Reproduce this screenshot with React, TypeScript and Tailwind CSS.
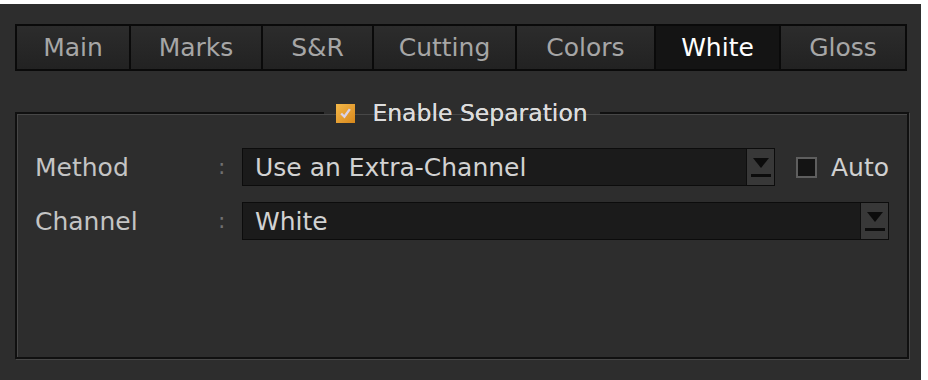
import React from "react";

const tabs = [
  { label: "Main", w: "w-[112px]" },
  { label: "Marks", w: "w-[130px]" },
  { label: "S&R", w: "w-[109px]" },
  { label: "Cutting", w: "w-[141px]" },
  { label: "Colors", w: "w-[137px]" },
  { label: "White", w: "w-[123px]", active: true },
  { label: "Gloss", w: "w-[124px]" },
];

function DropButton() {
  return (
    <div className="flex h-full w-[28px] shrink-0 flex-col items-center justify-center gap-[5px] border-l border-[#0e0e0e] bg-[#383838]">
      <svg width="18" height="12" viewBox="0 0 18 12">
        <path d="M1 1 H17 L9 11 Z" fill="#0c0c0c" />
      </svg>
      <div className="h-[3px] w-[20px] bg-[#0c0c0c]" />
    </div>
  );
}

function Select({ value, className }: { value: string; className: string }) {
  return (
    <div className={`flex h-[38px] items-center border border-[#0c0c0c] bg-[#1b1b1b] ${className}`}>
      <span className="flex-1 pl-[12px] text-[25px] leading-none text-[#d2d2d2]">{value}</span>
      <DropButton />
    </div>
  );
}

export default function App() {
  return (
    <div className="h-[380px] w-[928px] bg-white pt-[4px] pr-[7px]" style={{ fontFamily: '"DejaVu Sans", sans-serif' }}>
      <div className="h-[376px] w-[921px] bg-[#2d2d2d] pl-[15px] pt-[20px]">
        <div className="flex w-[892px] gap-[2px] border-2 border-[#0a0a0a] bg-[#0a0a0a]">
          {tabs.map((t) => (
            <div
              key={t.label}
              className={`flex h-[43px] items-center justify-center text-[25px] leading-none ${t.w} ${
                t.active
                  ? "bg-[#141414] text-white"
                  : "bg-gradient-to-b from-[#2c2c2c] to-[#222222] text-[#a6a6a6]"
              }`}
            >
              {t.label}
            </div>
          ))}
        </div>

        <fieldset className="mt-[27px] h-[261px] w-[888px] border-2 border-[#101010] px-[18px] shadow-[1px_1px_0_#474747,inset_1px_1px_0_#474747]">
          <legend className="mx-auto flex items-center px-[12px]">
            <span className="flex h-[19px] w-[19px] items-center justify-center bg-gradient-to-br from-[#f4b848] to-[#d8881a]">
              <svg width="13" height="13" viewBox="0 0 12 12">
                <path d="M2 6 L5 9 L10 2" fill="none" stroke="#d9d2ea" strokeWidth="2.2" />
              </svg>
            </span>
            <span className="ml-[17px] text-[23.5px] leading-[30px] text-[#dcdcdc] [text-shadow:0_0_0.5px_#dcdcdc]">
              Enable Separation
            </span>
          </legend>

          <div className="mt-[20px] flex flex-col gap-[16px]">
            <div className="flex items-center">
              <span className="w-[183px] text-[25px] leading-none text-[#c4c4c4]">Method</span>
              <span className="w-[24px] text-[22px] leading-none text-[#707070]">:</span>
              <Select value="Use an Extra-Channel" className="w-[533px]" />
              <span className="ml-[21px] h-[21px] w-[21px] border-2 border-[#5e5e5e] bg-[#141414]" />
              <span className="ml-[14px] text-[25px] leading-none text-[#d0d0d0]">Auto</span>
            </div>
            <div className="flex items-center">
              <span className="w-[183px] text-[25px] leading-none text-[#c4c4c4]">Channel</span>
              <span className="w-[24px] text-[22px] leading-none text-[#707070]">:</span>
              <Select value="White" className="w-[647px]" />
            </div>
          </div>
        </fieldset>
      </div>
    </div>
  );
}
